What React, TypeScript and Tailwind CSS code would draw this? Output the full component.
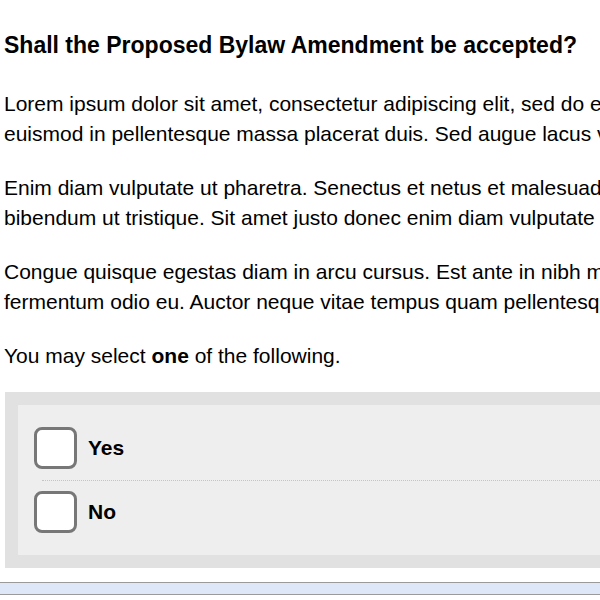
import React from "react";

const lines: string[][] = [
  [
    "Lorem ipsum dolor sit amet, consectetur adipiscing elit, sed do eiusmod tempor incididunt ut labore et dolore magna aliqua.",
    "euismod in pellentesque massa placerat duis. Sed augue lacus viverra vitae congue eu consequat ac felis.",
  ],
  [
    "Enim diam vulputate ut pharetra. Senectus et netus et malesuada fames ac turpis egestas.",
    "bibendum ut tristique. Sit amet justo donec enim diam vulputate ut pharetra sit.",
  ],
  [
    "Congue quisque egestas diam in arcu cursus. Est ante in nibh mauris cursus mattis molestie.",
    "fermentum odio eu. Auctor neque vitae tempus quam pellentesque nec nam aliquam sem.",
  ],
];

function Box() {
  return (
    <span className="block w-[43px] h-[42px] shrink-0 rounded-[8px] border-[3px] border-[#777777] bg-white" />
  );
}

export default function App() {
  return (
    <div
      className="w-[600px] h-[600px] overflow-hidden bg-white text-black"
      style={{ fontFamily: '"Liberation Sans", Arial, sans-serif' }}
    >
      <div className="pt-[30px]">
        <h1 className="pl-[4px] text-[23px] leading-[30px] font-bold whitespace-nowrap">
          Shall the Proposed Bylaw Amendment be accepted?
        </h1>
        <div className="mt-[29px] pl-[4px] text-[21px] leading-[30px]">
          {lines.map((p, i) => (
            <p key={i} className="mb-[24px] whitespace-nowrap">
              {p[0]}
              <br />
              {p[1]}
            </p>
          ))}
          <p className="whitespace-nowrap">
            You may select <b>one</b> of the following.
          </p>
        </div>
        <div className="mt-[21px] ml-[5px] w-[640px] bg-[#e1e1e1] p-[13px]">
          <div className="bg-[#eeeeee] pt-[11px] pb-[12px] pl-[16px]">
            <label className="flex items-center gap-[11px] py-[11px]">
              <Box />
              <span className="text-[21px] font-bold leading-[30px]">Yes</span>
            </label>
            <div className="ml-[8px] border-t border-dotted border-[#c4c4c4]" />
            <label className="flex items-center gap-[11px] py-[10px]">
              <Box />
              <span className="text-[21px] font-bold leading-[30px]">No</span>
            </label>
          </div>
        </div>
        <div className="mt-[14px] h-[13px] border-y border-[#9a9a9a] bg-[#dde7f8]" />
      </div>
    </div>
  );
}
